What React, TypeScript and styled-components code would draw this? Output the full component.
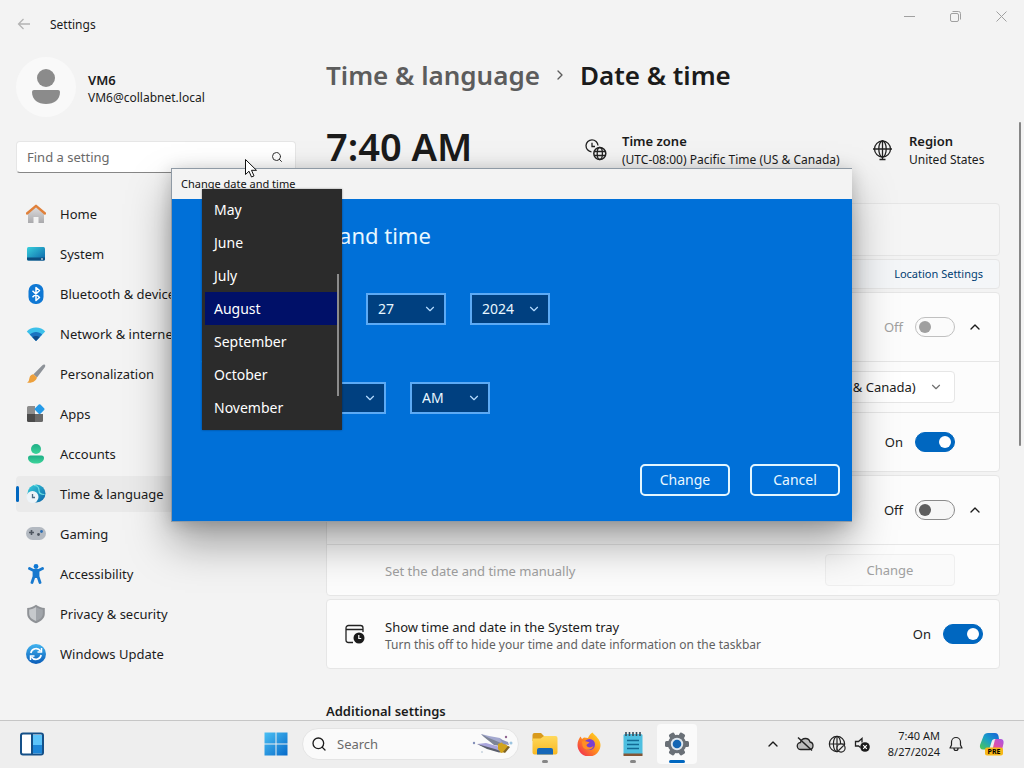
import { FC, ReactNode } from 'react';
import styled, { createGlobalStyle } from 'styled-components';
import { ChevronDown, ChevronRight, ChevronUp, Search } from 'lucide-react';

const colors = {
    window: '#f3f3f3',
    card: '#fcfcfc',
    line: '#e6e6e6',
    text: '#1b1b1b',
    muted: '#616161',
    disabled: '#a0a0a0',
    accent: '#0067c0',
    dialog: '#0070d8',
    dialogField: '#004080',
    dialogFieldBorder: '#5caaf5',
    menu: '#2b2b2b',
    menuActive: '#001068',
};

const GlobalStyle = createGlobalStyle`
    * {
        box-sizing: border-box;
    }
    body {
        margin: 0;
        font-family: "Noto Sans", "Open Sans", sans-serif;
        font-size: 13px;
        line-height: 20px;
        color: ${colors.text};
        background: ${colors.window};
    }
    button, input, select {
        font: inherit;
        color: inherit;
    }
    h1, h2, p, ul {
        margin: 0;
        padding: 0;
    }
`;

const Desktop = styled.div`
    position: relative;
    display: flex;
    flex-direction: column;
    height: 100vh;
    overflow: hidden;
`;

const SettingsWindow = styled.div`
    flex: 1;
    min-height: 0;
    display: flex;
    flex-direction: column;
    overflow: hidden;
`;

/* ---------- title bar ---------- */

const TitleBar = styled.header`
    flex: none;
    display: flex;
    align-items: center;
    height: 48px;
    padding-left: 16px;
    font-size: 12px;
`;

const TitleText = styled.span`
    padding-top: 2px;
`;

const BackButton = styled.button`
    display: flex;
    padding: 0;
    margin-right: 18px;
    border: 0;
    background: none;
    color: #b4b4b4;
`;

const WindowControls = styled.div`
    display: flex;
    margin-left: auto;
    align-self: flex-start;
`;

const WindowButton = styled.button`
    display: flex;
    align-items: center;
    justify-content: center;
    width: 46px;
    height: 32px;
    padding: 0;
    border: 0;
    background: none;
    color: #a0a0a0;
`;

const WindowBody = styled.div`
    flex: 1;
    min-height: 0;
    display: flex;
    align-items: flex-start;
`;

/* ---------- sidebar ---------- */

const Sidebar = styled.aside`
    flex: none;
    width: 326px;
    padding: 9px 18px 0 16px;
`;

const Profile = styled.div`
    display: flex;
    align-items: center;
    gap: 12px;
    margin-bottom: 24px;
`;

const Avatar = styled.div`
    display: flex;
    align-items: center;
    justify-content: center;
    width: 60px;
    height: 60px;
    border-radius: 50%;
    background: #f9f9f9;
`;

const ProfileText = styled.div`
    padding-top: 3px;
`;

const ProfileName = styled.p`
    font-weight: 600;
    line-height: 18px;
`;

const ProfileMail = styled.p`
    font-size: 12px;
    line-height: 18px;
`;

const SearchField = styled.label`
    display: flex;
    align-items: center;
    height: 32px;
    margin-right: 12px;
    padding: 0 12px 0 10px;
    border: 1px solid ${colors.line};
    border-bottom-color: #868686;
    border-radius: 4px;
    background: #ffffff;
    color: #333333;
`;

const SearchInput = styled.input`
    flex: 1;
    min-width: 0;
    padding: 0;
    border: 0;
    outline: 0;
    background: none;
    &::placeholder {
        color: #6a6a6a;
        opacity: 1;
    }
`;

const Nav = styled.nav`
    display: flex;
    flex-direction: column;
    gap: 4px;
    margin-top: 23px;
`;

const NavLink = styled.a<{ $active?: boolean }>`
    display: flex;
    align-items: center;
    gap: 14px;
    height: 36px;
    border-radius: 4px;
    color: ${colors.text};
    text-decoration: none;
    white-space: nowrap;
    background: ${({ $active }) => ($active ? '#eaeaea' : 'none')};
    &::before {
        content: '';
        width: 3px;
        height: 16px;
        margin-right: -7px;
        border-radius: 2px;
        background: ${({ $active }) => ($active ? colors.accent : 'none')};
    }
    svg {
        flex: none;
    }
`;

/* ---------- main column ---------- */

const Main = styled.main`
    flex: 1;
    min-width: 0;
    padding-top: 7px;
`;

const Breadcrumb = styled.div`
    display: flex;
    align-items: center;
    height: 40px;
    font-size: 26px;
    font-weight: 600;
    line-height: 40px;
`;

const CrumbLink = styled.a`
    color: #5c5c5c;
    text-decoration: none;
`;

const CrumbTitle = styled.h1`
    font: inherit;
`;

const CrumbArrow = styled(ChevronRight)`
    margin: 0 12px;
    color: #5c5c5c;
`;

const Summary = styled.div`
    display: grid;
    grid-template-columns: 1fr 287px 128px;
    align-items: center;
    height: 56px;
    margin: 23px 0 29px;
`;

const Clock = styled.p`
    font-size: 38px;
    font-weight: 600;
    line-height: 56px;
`;

const SummaryItem = styled.div`
    display: flex;
    align-items: center;
    gap: 15px;
    padding-top: 8px;
    white-space: nowrap;
`;

const SummaryLabel = styled.p`
    font-weight: 600;
    line-height: 20px;
`;

const SummaryValue = styled.p`
    font-size: 12px;
    line-height: 18px;
`;

const Card = styled.section<{ $tone?: string }>`
    margin-bottom: 3px;
    border: 1px solid ${colors.line};
    border-radius: 4px;
    background: ${({ $tone }) => $tone || colors.card};
`;

const Row = styled.div<{ $height: number; $inset?: boolean }>`
    display: flex;
    align-items: center;
    justify-content: flex-end;
    gap: 12px;
    height: ${({ $height }) => $height}px;
    padding: 0 ${({ $inset }) => ($inset ? 44 : 16)}px 0 18px;
    & + & {
        border-top: 1px solid ${colors.line};
    }
`;

const RowText = styled.div<{ $disabled?: boolean; $indent?: boolean }>`
    flex: 1;
    padding: 2px 0 0 ${({ $indent }) => ($indent ? 40 : 8)}px;
    color: ${({ $disabled }) => ($disabled ? colors.disabled : colors.text)};
`;

const RowHint = styled.p`
    font-size: 12px;
    line-height: 16px;
    color: ${colors.muted};
`;

const LocationLink = styled.a`
    font-size: 11px;
    color: #003e73;
    text-decoration: none;
`;

const SwitchLabel = styled.label<{ $disabled?: boolean }>`
    display: flex;
    align-items: center;
    gap: 12px;
    color: ${({ $disabled }) => ($disabled ? colors.disabled : colors.text)};
`;

const Switch = styled.input`
    appearance: none;
    display: flex;
    align-items: center;
    width: 40px;
    height: 20px;
    margin: 0;
    padding: 0 3px;
    border: 1px solid #8a8a8a;
    border-radius: 10px;
    background: #f6f6f6;
    &::before {
        content: '';
        width: 12px;
        height: 12px;
        border-radius: 50%;
        background: #5d5d5d;
    }
    &:disabled {
        border-color: #c0c0c0;
        background: #fbfbfb;
    }
    &:disabled::before {
        background: #a0a0a0;
    }
    &:checked {
        justify-content: flex-end;
        border-color: ${colors.accent};
        background: ${colors.accent};
    }
    &:checked::before {
        background: #ffffff;
    }
`;

const ExpandButton = styled.button`
    display: flex;
    padding: 0;
    border: 0;
    background: none;
`;

const DisabledButton = styled.button`
    width: 130px;
    height: 32px;
    border: 1px solid #efefef;
    border-radius: 4px;
    background: #fafafa;
    color: ${colors.disabled};
`;

const SelectBox = styled.div<{ $width: number; $dark?: boolean }>`
    position: relative;
    width: ${({ $width }) => $width}px;
    select {
        appearance: none;
        width: 100%;
        height: 32px;
        padding: 0 24px 0 ${({ $dark }) => ($dark ? 10 : 12)}px;
        border: ${({ $dark }) => ($dark ? `2px solid ${colors.dialogFieldBorder}` : `1px solid ${colors.line}`)};
        border-radius: ${({ $dark }) => ($dark ? 0 : 4)}px;
        background: ${({ $dark }) => ($dark ? colors.dialogField : '#ffffff')};
    }
    svg {
        position: absolute;
        top: 9px;
        right: ${({ $dark }) => ($dark ? 9 : 12)}px;
        pointer-events: none;
        color: ${({ $dark }) => ($dark ? '#b5dcff' : '#707070')};
    }
`;

const SectionTitle = styled.h2`
    padding-top: 28px;
    font-size: 13px;
    font-weight: 600;
    line-height: 22px;
`;

const ScrollThumb = styled.div`
    flex: none;
    width: 2px;
    height: 324px;
    margin: 74px 3px 0 19px;
    border-radius: 1px;
    background: #868686;
`;

/* ---------- dialog ---------- */

const Dialog = styled.section`
    position: absolute;
    top: 168px;
    left: 50%;
    width: 681px;
    margin-left: -341px;
    border: 1px solid #8f9aa5;
    border-width: 1px 0 1px 1px;
    background: ${colors.dialog};
    color: #e8f7ff;
    box-shadow: 0 22px 40px rgba(0, 0, 0, 0.34), 0 2px 16px rgba(0, 0, 0, 0.18);
`;

const DialogBar = styled.header`
    height: 30px;
    padding-left: 9px;
    font-size: 11px;
    line-height: 30px;
    color: #111111;
    background: #f3f3f3;
`;

const DialogBody = styled.div`
    padding: 20px 12px 25px 30px;
    font-size: 14px;
`;

const DialogTitle = styled.h2`
    font-size: 22px;
    font-weight: 400;
    line-height: 32px;
`;

const FieldSet = styled.fieldset`
    min-width: 0;
    margin: 0;
    padding: 16px 0 0;
    border: 0;
    legend {
        float: left;
        width: 100%;
        padding: 0;
        margin-bottom: 6px;
        line-height: 20px;
    }
    & + & {
        padding-top: 31px;
    }
`;

const FieldRow = styled.div`
    clear: both;
    display: flex;
    gap: 24px;
`;

const DialogActions = styled.div`
    display: flex;
    justify-content: flex-end;
    gap: 20px;
    padding-top: 50px;
`;

const DialogButton = styled.button`
    width: 90px;
    height: 32px;
    padding: 0;
    border: 2px solid #e2f6ff;
    border-radius: 5px;
    background: ${colors.dialog};
`;

const MonthMenu = styled.ul`
    position: absolute;
    top: 20px;
    left: 30px;
    width: 140px;
    padding: 4px 5px 6px 3px;
    list-style: none;
    background: ${colors.menu};
    color: #ffffff;
    font-size: 14px;
    line-height: 33px;
    box-shadow: 0 0 2px rgba(0, 0, 0, 0.4);
    &::after {
        content: '';
        position: absolute;
        top: 85px;
        right: 3px;
        width: 2px;
        height: 122px;
        background: #8c8c8c;
    }
`;

const MonthOption = styled.li<{ $active: boolean }>`
    padding-left: 9px;
    background: ${({ $active }) => ($active ? colors.menuActive : 'none')};
`;

const Pointer = styled.svg`
    position: absolute;
    top: 158px;
    left: 244px;
`;

/* ---------- taskbar ---------- */

const Taskbar = styled.footer`
    flex: none;
    display: flex;
    align-items: center;
    height: 48px;
    padding-right: 13px;
    background: #eeeeee;
    box-shadow: inset 0 1px 0 #c6c6c6;
`;

const TaskbarStart = styled.div`
    flex: 0 1 256px;
    padding-left: 12px;
`;

const TaskbarApps = styled.div`
    display: flex;
    align-items: center;
    gap: 4px;
`;

const TaskButton = styled.button<{ $state?: 'open' | 'active' }>`
    position: relative;
    display: flex;
    align-items: center;
    justify-content: center;
    width: 40px;
    height: 40px;
    padding: 0;
    border: 0;
    border-radius: 4px;
    background: ${({ $state }) => ($state === 'active' ? '#fafafa' : 'none')};
    &::after {
        content: '';
        display: ${({ $state }) => ($state ? 'block' : 'none')};
        position: absolute;
        bottom: 1px;
        width: ${({ $state }) => ($state === 'active' ? 16 : 6)}px;
        height: 3px;
        border-radius: 2px;
        background: ${({ $state }) => ($state === 'active' ? colors.accent : '#868686')};
    }
`;

const TaskSearch = styled.label`
    display: flex;
    align-items: center;
    gap: 10px;
    width: 217px;
    height: 32px;
    margin: 0 2px;
    padding: 0 4px 0 8px;
    border: 1px solid #e4e4e4;
    border-radius: 16px;
    background: #fafafa;
`;

const Tray = styled.div`
    display: flex;
    align-items: center;
    margin-left: auto;
`;

const TrayButton = styled.button<{ $width: number }>`
    display: flex;
    align-items: center;
    justify-content: center;
    width: ${({ $width }) => $width}px;
    height: 40px;
    padding: 0;
    border: 0;
    background: none;
`;

const TrayClock = styled.div`
    width: 69px;
    text-align: right;
    font-size: 11px;
    line-height: 16px;
`;

/* ---------- drawings ---------- */

const IconDefs: FC = () => (
    <svg width="0" height="0" style={{ position: 'absolute' }} aria-hidden="true">
        <defs>
            <linearGradient id="teal" x1="0" y1="0" x2="1" y2="1">
                <stop offset="0" stopColor="#38d0dc" />
                <stop offset="1" stopColor="#0b62a8" />
            </linearGradient>
            <linearGradient id="sky" x1="0" y1="0" x2="0" y2="1">
                <stop offset="0" stopColor="#41b4f0" />
                <stop offset="1" stopColor="#0a5cb8" />
            </linearGradient>
            <linearGradient id="wall" x1="0" y1="0" x2="0" y2="1">
                <stop offset="0" stopColor="#e0dedf" />
                <stop offset="1" stopColor="#a9a9ac" />
            </linearGradient>
            <linearGradient id="green" x1="0" y1="0" x2="0" y2="1">
                <stop offset="0" stopColor="#1fae86" />
                <stop offset="1" stopColor="#3cd49a" />
            </linearGradient>
            <linearGradient id="start" x1="0" y1="0" x2="24" y2="24" gradientUnits="userSpaceOnUse">
                <stop offset="0" stopColor="#4cc2f5" />
                <stop offset="1" stopColor="#0568c8" />
            </linearGradient>
            <linearGradient id="folder" x1="0" y1="0" x2="0" y2="1">
                <stop offset="0" stopColor="#ffd95c" />
                <stop offset="1" stopColor="#f7b823" />
            </linearGradient>
            <linearGradient id="fox" x1="1" y1="0" x2="0" y2="1">
                <stop offset="0" stopColor="#ffe226" />
                <stop offset="0.5" stopColor="#ff8a1e" />
                <stop offset="1" stopColor="#ee1c5c" />
            </linearGradient>
            <linearGradient id="pilotA" x1="0" y1="1" x2="1" y2="0">
                <stop offset="0" stopColor="#53c94a" />
                <stop offset="0.5" stopColor="#19a0c8" />
                <stop offset="1" stopColor="#1760d8" />
            </linearGradient>
            <linearGradient id="pilotB" x1="0" y1="1" x2="1" y2="0">
                <stop offset="0" stopColor="#f57a4c" />
                <stop offset="0.5" stopColor="#e04fa8" />
                <stop offset="1" stopColor="#a558e8" />
            </linearGradient>
        </defs>
    </svg>
);

const HomeIcon = () => (
    <svg width="20" height="20" viewBox="0 0 20 20">
        <path d="M2 9 10 2.500 18 9v10h-5.500v-6h-5v6H2z" fill="url(#wall)" />
        <path d="M1 9.500 10 1.800l9 7.700" fill="none" stroke="#e0803a" strokeWidth="2.400" strokeLinecap="round" strokeLinejoin="round" />
    </svg>
);

const SystemIcon = () => (
    <svg width="20" height="20" viewBox="0 0 20 20">
        <rect x="1" y="3" width="18" height="13.500" rx="1.500" fill="url(#teal)" />
        <path d="M1 13.500h18V15a1.500 1.500 0 0 1-1.500 1.500h-15A1.500 1.500 0 0 1 1 15z" fill="#0d4f80" />
        <path d="M15 15h2" stroke="#ffffff" />
    </svg>
);

const BluetoothIcon = () => (
    <svg width="20" height="20" viewBox="0 0 20 20">
        <rect x="2.500" y="0" width="15" height="20" rx="7" fill="#0f78d4" />
        <path d="m6.500 6.800 7 6.700-3.500 3V3.500l3.500 3-7 6.700" fill="none" stroke="#ffffff" strokeWidth="1.500" strokeLinejoin="round" />
    </svg>
);

const NetworkIcon = () => (
    <svg width="20" height="20" viewBox="0 0 20 20">
        <path d="M10 17 .8 7.500C3 4.800 6.300 3.500 10 3.500s7 1.300 9.200 4z" fill="#3cc0ea" />
        <path d="M10 17 3.800 10.500C5.500 9 7.600 8 10 8s4.500 1 6.200 2.500z" fill="#1a72c0" />
        <path d="m10 17-3.600-3.800C7.400 12.400 8.600 12 10 12s2.600.4 3.600 1.200z" fill="#104a8a" />
    </svg>
);

const BrushIcon = () => (
    <svg width="20" height="20" viewBox="0 0 20 20">
        <path d="M18.800.8c.8.700.5 1.700-.2 2.700l-7.600 10-3.500-3.300 8.700-8.700c.9-.9 1.900-1.300 2.600-.7z" fill="#8d9298" />
        <path d="M7.500 10.200 11 13.500c-1.200 3.800-5 6-10 5 2-1 2-2.500 2.500-4.800.5-2.200 2.200-3.500 4-3.500z" fill="#eda03c" />
    </svg>
);

const AppsIcon = () => (
    <svg width="20" height="20" viewBox="0 0 20 20">
        <path d="M1 3.500A1.500 1.500 0 0 1 2.500 2H9v8H1z" fill="#8c8c8c" />
        <path d="M1 10h8v8H2.500A1.500 1.500 0 0 1 1 16.500z" fill="#4b4b4b" />
        <path d="M9 10h8v6.500a1.500 1.500 0 0 1-1.500 1.500H9z" fill="#696969" />
        <rect x="9.800" y="1.300" width="7.600" height="7.600" rx="1.200" transform="rotate(45 13.600 5.100)" fill="#249ae8" />
    </svg>
);

const AccountsIcon = () => (
    <svg width="20" height="20" viewBox="0 0 20 20">
        <circle cx="10" cy="5" r="5" fill="url(#green)" />
        <path d="M4.500 11.500h11A2.500 2.500 0 0 1 18 14c0 3.500-3.500 5.500-8 5.500S2 17.500 2 14a2.500 2.500 0 0 1 2.500-2.500z" fill="url(#green)" />
    </svg>
);

const TimeIcon = () => (
    <svg width="20" height="20" viewBox="0 0 20 20">
        <circle cx="10.500" cy="9.500" r="9" fill="url(#teal)" />
        <path d="M8 1.500c4 0 5 2.500 5 5s2 4 5.500 4" fill="none" stroke="#6fe0e2" strokeWidth="1.200" />
        <circle cx="6.500" cy="13" r="6" fill="#eef4f8" />
        <path d="M6.500 10v3.500H9" fill="none" stroke="#4b6a84" strokeWidth="1.300" />
    </svg>
);

const GamingIcon = () => (
    <svg width="20" height="20" viewBox="0 0 20 20">
        <rect x="0" y="3" width="20" height="13" rx="6.500" fill="#b3b9c1" />
        <path d="M3 8.500h5M5.500 6v5" stroke="#4e5660" strokeWidth="1.600" />
        <circle cx="15.500" cy="7.500" r="1.400" fill="#2f6eb0" />
        <circle cx="12.500" cy="10.500" r="1.400" fill="#4e5660" />
    </svg>
);

const AccessibilityIcon = () => (
    <svg width="20" height="20" viewBox="0 0 20 20">
        <circle cx="10" cy="2.500" r="2.400" fill="#0f78d4" />
        <path d="m3.500 4.500 4 2h5l4-2M10 6.500v6M8 7v5.500L6 18.500M12 7v5.500l2 6" fill="none" stroke="#1779cf" strokeWidth="2.800" strokeLinecap="round" strokeLinejoin="round" />
    </svg>
);

const PrivacyIcon = () => (
    <svg width="20" height="20" viewBox="0 0 20 20">
        <path d="M10 .8c2.500 2 5.500 3 8.800 3.200v5.500c0 4.500-3.300 7.700-8.800 9.700-5.500-2-8.800-5.200-8.800-9.700V4C4.500 3.800 7.500 2.800 10 .8z" fill="#8f9296" />
        <path d="M10 3c2 1.400 4.300 2.300 6.800 2.600v4c0 3.400-2.400 5.800-6.800 7.500z" fill="#a1a5aa" />
        <path d="M10 3C8 4.400 5.700 5.300 3.200 5.600v4c0 3.400 2.400 5.800 6.800 7.500z" fill="#c6c9cc" />
    </svg>
);

const UpdateIcon = () => (
    <svg width="20" height="20" viewBox="0 0 20 20">
        <circle cx="10" cy="10" r="10" fill="url(#sky)" />
        <path d="M4.800 9A5.400 5.400 0 0 1 14.500 7M15.200 11A5.400 5.400 0 0 1 5.500 13" fill="none" stroke="#ffffff" strokeWidth="1.600" />
        <path d="M15.500 4v4h-4M4.500 16v-4h4" fill="none" stroke="#ffffff" strokeWidth="1.500" />
    </svg>
);

const GlobePaths = () => (
    <>
        <circle cx="10" cy="10" r="8.500" />
        <ellipse cx="10" cy="10" rx="4" ry="8.500" />
        <path d="M1.500 10h17M10 1.500v17" />
    </>
);

const RegionIcon = () => (
    <svg width="22" height="22" viewBox="0 0 22 22" fill="none" stroke="#222222" strokeWidth="1.300">
        <circle cx="10.500" cy="10" r="8" />
        <ellipse cx="10.500" cy="10" rx="3.700" ry="8" />
        <path d="M1 10h19M10.500 1v20M7.500 20.500h6" />
    </svg>
);

const TimeZoneIcon = () => (
    <svg width="22" height="22" viewBox="0 0 22 22" fill="none" stroke="#222222" strokeWidth="1.300">
        <path d="M6.500 12.800A6 6 0 1 1 13 6.500M7 3.800V7.500h3" />
        <circle cx="14.800" cy="14.500" r="6" strokeWidth="1.500" />
        <ellipse cx="14.800" cy="14.500" rx="2.600" ry="6" />
        <path d="M9.300 12.500h11M9.300 16.500h11" />
    </svg>
);

const CalendarClockIcon = () => (
    <svg width="20" height="20" viewBox="0 0 20 20">
        <path d="M8 18.500H3.500a2.500 2.500 0 0 1-2.500-2.500V4a2.500 2.500 0 0 1 2.500-2.500h12A2.500 2.500 0 0 1 18 4v4M1 5.500h17" fill="none" stroke="#222222" strokeWidth="1.300" />
        <circle cx="14" cy="14" r="5.500" fill="#1b1b1b" />
        <path d="M13.800 11v3.500h2.400" fill="none" stroke="#ffffff" strokeWidth="1.200" />
    </svg>
);

const BloomIcon = () => (
    <svg width="42" height="26" viewBox="0 0 42 26">
        <path d="m9 3 8 2 11 2 5 4-7 3-11-6z" fill="#a3a8cf" />
        <path d="m9 3 3 3 10 8 6 1 1-3-12-5z" fill="#7d8496" />
        <path d="m5 13 9-1 14 4 3 5-8-1z" fill="#a9a5dc" />
        <path d="m5 13 10 5 12 3.500 4-.5-8-3z" fill="#5b5f6c" />
        <path d="m26 13 5-2 6 5-4 5-4 1-3-4z" fill="#d2a31c" />
        <path d="m28 8 8 3 1 3-6-1z" fill="#8d95bd" />
        <path d="m31 21 5-6 2 1-5 6z" fill="#7e6324" />
        <circle cx="2" cy="12" r="1.200" fill="#8590b8" />
        <circle cx="34" cy="6" r="1.200" fill="#8f6490" />
        <circle cx="39" cy="12" r="1.500" fill="#9cc4e0" />
        <circle cx="10" cy="21" r="0.800" fill="#a5b8ca" />
    </svg>
);

const WidgetsIcon = () => (
    <svg width="24" height="24" viewBox="0 0 24 24">
        <rect x="1" y="1.500" width="22" height="21" rx="2" fill="#ffffff" stroke="#155088" strokeWidth="2" />
        <path d="M13 3h9v10h-9z" fill="#5cc4fa" />
        <path d="M13 13h9v8.500h-9z" fill="#1c86d8" />
        <path d="M12 2v20" stroke="#155088" strokeWidth="2" />
    </svg>
);

const StartIcon = () => (
    <svg width="24" height="24" viewBox="0 0 24 24" fill="url(#start)">
        <path d="M.5.5h11v11H.5zM12.500.5h11v11h-11zM.5 12.500h11v11H.5zM12.500 12.500h11v11h-11z" />
    </svg>
);

const ExplorerIcon = () => (
    <svg width="26" height="24" viewBox="0 0 26 24">
        <path d="M.5 3A2 2 0 0 1 2.500 1H9l3 3v5H.5z" fill="#d99a1c" />
        <path d="M.5 6.500h8L12 4h11.500a2 2 0 0 1 2 2v14.500a2 2 0 0 1-2 2h-21a2 2 0 0 1-2-2z" fill="url(#folder)" />
        <path d="M5 22.500V18a2 2 0 0 1 2-2h12a2 2 0 0 1 2 2v4.500z" fill="#1567b8" />
    </svg>
);

const FirefoxIcon = () => (
    <svg width="24" height="24" viewBox="0 0 24 24">
        <path d="M15.500.5c1 2 3.500 3 5 5.500 1.800 2 3 4.500 3 7A11.500 11.500 0 1 1 .5 13C.5 9.500 2 6.500 3.500 4.500L5 7l2-1.500L11 6c1-2.500 2.500-4.500 4.500-5.500z" fill="url(#fox)" />
        <circle cx="12.500" cy="12.500" r="5.500" fill="#7a3fd0" />
        <path d="M5 9.500c3-1.500 5 .5 7.500.5-1 2-3 2-3 3.500 1 2.500 5 2.500 7 .5-1 4.500-9 5.500-11 0z" fill="#ff8f24" />
    </svg>
);

const NotepadIcon = () => (
    <svg width="22" height="26" viewBox="0 0 22 26">
        <rect x="1.500" y="3" width="19" height="21" rx="1.500" fill="#4ebfe0" />
        <path d="M4 1v4M7.500 1v4M11 1v4M14.500 1v4M18 1v4" stroke="#3a4a58" strokeWidth="1.600" />
        <path d="M5 9.500h12M5 13.500h12M5 17.500h12" stroke="#126a94" strokeWidth="1.500" />
        <path d="M1.500 22.500h19V25h-19z" fill="#855636" />
    </svg>
);

const GearIcon = () => (
    <svg width="26" height="26" viewBox="0 0 26 26">
        <g fill="#6a7077">
            <rect x="10" y="1" width="6" height="24" rx="1.500" transform="rotate(30 13 13)" />
            <rect x="10" y="1" width="6" height="24" rx="1.500" transform="rotate(90 13 13)" />
            <rect x="10" y="1" width="6" height="24" rx="1.500" transform="rotate(150 13 13)" />
            <circle cx="13" cy="13" r="9.200" />
        </g>
        <circle cx="13" cy="13" r="6.200" fill="#dfe7ee" />
        <circle cx="13" cy="13" r="4.300" fill="#1466b4" />
    </svg>
);

const CloudOffIcon = () => (
    <svg width="18" height="16" viewBox="0 0 18 16">
        <path d="M5 13.500a3.500 3.500 0 0 1-.5-7C5 4 7 2.500 9.500 2.500s4 1.500 4.500 3.500a3.800 3.800 0 0 1-.5 7.500z" fill="#bdbdbd" stroke="#222222" strokeWidth="1.300" />
        <path d="m2 1.500 14 13" stroke="#222222" strokeWidth="1.500" />
    </svg>
);

const GlobeOffIcon = () => (
    <svg width="18" height="18" viewBox="0 0 20 20" fill="none" stroke="#222222" strokeWidth="1.300">
        <GlobePaths />
        <circle cx="14.500" cy="14.500" r="4.500" fill="#eeeeee" />
        <path d="m11.500 17.500 6-6" />
    </svg>
);

const VolumeOffIcon = () => (
    <svg width="16" height="16" viewBox="0 0 16 16">
        <path d="M6.500 11.500 4.500 10H1.500V5.500h3L8 2.500v4" fill="none" stroke="#222222" strokeWidth="1.300" />
        <circle cx="11" cy="11" r="4.800" fill="#1b1b1b" />
        <path d="m9.200 9.200 3.600 3.600M12.800 9.200l-3.600 3.600" stroke="#ffffff" strokeWidth="1.200" />
    </svg>
);

const BellIcon = () => (
    <svg width="14" height="16" viewBox="0 0 14 16" fill="none" stroke="#222222" strokeWidth="1.200">
        <path d="M1 12h12l-1.500-3V6a4.500 4.500 0 0 0-9 0v3zM5 12.500a2 2 0 0 0 4 0" strokeLinejoin="round" />
    </svg>
);

const PreBadge = styled.text`
    font-size: 7px;
    font-weight: 700;
`;

const CopilotIcon = () => (
    <svg width="26" height="26" viewBox="0 0 26 26">
        <path d="M9 2h7c2 0 3 1 3.500 3L20 8h-4c-2 0-3 1-3.500 3l-1.500 5c-.5 2-1.500 2.500-3 2.500H4c-2.500 0-3.500-2-3-4.500L4.500 5C5 3 7 2 9 2z" fill="url(#pilotA)" />
        <path d="M17 8h4.500c2.500 0 3.500 2 3 4.500L23 19c-.5 2-2 3-4 3h-7c-2 0-3-1-2.500-3h2c1.500 0 2-1 2.500-2.500l1.500-6C15.800 9 16 8 17 8z" fill="url(#pilotB)" />
        <rect x="6" y="16.500" width="18" height="8" rx="2" fill="#f8b818" />
        <PreBadge x="15" y="23" textAnchor="middle">PRE</PreBadge>
    </svg>
);

/* ---------- data ---------- */

type INavItem = {
    label: string;
    icon: ReactNode;
    active?: boolean;
}

const navItems: INavItem[] = [
    { label: 'Home', icon: <HomeIcon /> },
    { label: 'System', icon: <SystemIcon /> },
    { label: 'Bluetooth & devices', icon: <BluetoothIcon /> },
    { label: 'Network & internet', icon: <NetworkIcon /> },
    { label: 'Personalization', icon: <BrushIcon /> },
    { label: 'Apps', icon: <AppsIcon /> },
    { label: 'Accounts', icon: <AccountsIcon /> },
    { label: 'Time & language', icon: <TimeIcon />, active: true },
    { label: 'Gaming', icon: <GamingIcon /> },
    { label: 'Accessibility', icon: <AccessibilityIcon /> },
    { label: 'Privacy & security', icon: <PrivacyIcon /> },
    { label: 'Windows Update', icon: <UpdateIcon /> },
];

const months = ['May', 'June', 'July', 'August', 'September', 'October', 'November'];

/* ---------- components ---------- */

type ISelectProps = {
    label: string;
    value: string;
    width: number;
    dark?: boolean;
}

const SelectField: FC<ISelectProps> = ({ label, value, width, dark }) => (
    <SelectBox $width={width} $dark={dark}>
        <select aria-label={label} defaultValue={value}>
            <option>{value}</option>
        </select>
        <ChevronDown size={14} strokeWidth={2} />
    </SelectBox>
);

type IToggleProps = {
    label: string;
    on?: boolean;
    disabled?: boolean;
}

const Toggle: FC<IToggleProps> = ({ label, on, disabled }) => (
    <SwitchLabel $disabled={disabled}>
        {on ? 'On' : 'Off'}
        <Switch type="checkbox" role="switch" aria-label={label} defaultChecked={on} disabled={disabled} />
    </SwitchLabel>
);

const Expander: FC = () => (
    <ExpandButton aria-label="Collapse">
        <ChevronUp size={16} strokeWidth={2} />
    </ExpandButton>
);

const SettingsSidebar: FC = () => (
    <Sidebar>
        <Profile>
            <Avatar>
                <svg width="30" height="36" viewBox="0 0 30 36" fill="#8b8b8b">
                    <circle cx="15" cy="9" r="9" />
                    <path d="M3 21h24a2 2 0 0 1 2 2c0 8-6 12-14 12S1 31 1 23a2 2 0 0 1 2-2z" />
                </svg>
            </Avatar>
            <ProfileText>
                <ProfileName>VM6</ProfileName>
                <ProfileMail>VM6@collabnet.local</ProfileMail>
            </ProfileText>
        </Profile>
        <SearchField>
            <SearchInput type="text" placeholder="Find a setting" aria-label="Find a setting" />
            <Search size={12} strokeWidth={2} />
        </SearchField>
        <Nav>
            {navItems.map((item) => (
                <NavLink key={item.label} href="#" $active={item.active}>
                    {item.icon}
                    {item.label}
                </NavLink>
            ))}
        </Nav>
    </Sidebar>
);

const DateTimePage: FC = () => (
    <Main>
        <Breadcrumb>
            <CrumbLink href="#">Time &amp; language</CrumbLink>
            <CrumbArrow size={16} strokeWidth={2} />
            <CrumbTitle>Date &amp; time</CrumbTitle>
        </Breadcrumb>
        <Summary>
            <Clock>7:40 AM</Clock>
            <SummaryItem>
                <TimeZoneIcon />
                <div>
                    <SummaryLabel>Time zone</SummaryLabel>
                    <SummaryValue>(UTC-08:00) Pacific Time (US &amp; Canada)</SummaryValue>
                </div>
            </SummaryItem>
            <SummaryItem>
                <RegionIcon />
                <div>
                    <SummaryLabel>Region</SummaryLabel>
                    <SummaryValue>United States</SummaryValue>
                </div>
            </SummaryItem>
        </Summary>

        <Card $tone="#f5f5f5">
            <Row $height={51} />
        </Card>
        <Card $tone="#f4f6f8">
            <Row $height={28}>
                <LocationLink href="#">Location Settings</LocationLink>
            </Row>
        </Card>
        <Card>
            <Row $height={68}>
                <Toggle label="Set time zone automatically" disabled />
                <Expander />
            </Row>
            <Row $height={51} $inset>
                <SelectField label="Time zone" value="(UTC-08:00) Pacific Time (US & Canada)" width={288} />
            </Row>
            <Row $height={59} $inset>
                <Toggle label="Adjust for daylight saving time" on />
            </Row>
        </Card>
        <Card>
            <Row $height={68}>
                <Toggle label="Set time automatically" />
                <Expander />
            </Row>
            <Row $height={51} $inset>
                <RowText $disabled $indent>Set the date and time manually</RowText>
                <DisabledButton disabled>Change</DisabledButton>
            </Row>
        </Card>
        <Card>
            <Row $height={68}>
                <CalendarClockIcon />
                <RowText>
                    Show time and date in the System tray
                    <RowHint>Turn this off to hide your time and date information on the taskbar</RowHint>
                </RowText>
                <Toggle label="Show time and date in the System tray" on />
            </Row>
        </Card>
        <SectionTitle>Additional settings</SectionTitle>
    </Main>
);

const ChangeDialog: FC = () => (
    <Dialog role="dialog" aria-label="Change date and time">
        <DialogBar>Change date and time</DialogBar>
        <DialogBody>
            <DialogTitle>Change date and time</DialogTitle>
            <FieldSet>
                <legend>Date</legend>
                <FieldRow>
                    <SelectField label="Month" value="August" width={140} dark />
                    <SelectField label="Day" value="27" width={80} dark />
                    <SelectField label="Year" value="2024" width={80} dark />
                </FieldRow>
            </FieldSet>
            <FieldSet>
                <legend>Time</legend>
                <FieldRow>
                    <SelectField label="Hour" value="7" width={80} dark />
                    <SelectField label="Minute" value="" width={80} dark />
                    <SelectField label="AM or PM" value="AM" width={80} dark />
                </FieldRow>
            </FieldSet>
            <DialogActions>
                <DialogButton>Change</DialogButton>
                <DialogButton>Cancel</DialogButton>
            </DialogActions>
        </DialogBody>
        <MonthMenu role="listbox" aria-label="Month">
            {months.map((month) => (
                <MonthOption key={month} role="option" aria-selected={month === 'August'} $active={month === 'August'}>
                    {month}
                </MonthOption>
            ))}
        </MonthMenu>
    </Dialog>
);

const DesktopTaskbar: FC = () => (
    <Taskbar>
        <TaskbarStart>
            <TaskButton aria-label="Widgets"><WidgetsIcon /></TaskButton>
        </TaskbarStart>
        <TaskbarApps>
            <TaskButton aria-label="Start"><StartIcon /></TaskButton>
            <TaskSearch>
                <Search size={16} strokeWidth={2} />
                <SearchInput type="text" placeholder="Search" aria-label="Search" />
                <BloomIcon />
            </TaskSearch>
            <TaskButton aria-label="File Explorer" $state="open"><ExplorerIcon /></TaskButton>
            <TaskButton aria-label="Firefox"><FirefoxIcon /></TaskButton>
            <TaskButton aria-label="Notepad" $state="open"><NotepadIcon /></TaskButton>
            <TaskButton aria-label="Settings" $state="active"><GearIcon /></TaskButton>
        </TaskbarApps>
        <Tray>
            <TrayButton $width={32} aria-label="Show hidden icons"><ChevronUp size={16} strokeWidth={2} /></TrayButton>
            <TrayButton $width={32} aria-label="OneDrive"><CloudOffIcon /></TrayButton>
            <TrayButton $width={32} aria-label="Network"><GlobeOffIcon /></TrayButton>
            <TrayButton $width={18} aria-label="Volume"><VolumeOffIcon /></TrayButton>
            <TrayClock>
                <p>7:40 AM</p>
                <p>8/27/2024</p>
            </TrayClock>
            <TrayButton $width={32} aria-label="Notifications"><BellIcon /></TrayButton>
            <TrayButton $width={39} aria-label="Copilot"><CopilotIcon /></TrayButton>
        </Tray>
    </Taskbar>
);

const App: FC = () => {

    return <>
        <GlobalStyle />
        <IconDefs />
        <Desktop>
            <SettingsWindow>
                <TitleBar>
                    <BackButton aria-label="Back">
                        <svg width="16" height="16" viewBox="0 0 16 16" fill="none" stroke="currentColor" strokeWidth="1.300">
                            <path d="M14 8H2.500M7.500 3l-5 5 5 5" />
                        </svg>
                    </BackButton>
                    <TitleText>Settings</TitleText>
                    <WindowControls>
                        <WindowButton aria-label="Minimize">
                            <svg width="11" height="11" viewBox="0 0 11 11" stroke="currentColor"><path d="M0 5.500h11" /></svg>
                        </WindowButton>
                        <WindowButton aria-label="Restore">
                            <svg width="11" height="11" viewBox="0 0 11 11" fill="none" stroke="currentColor">
                                <rect x="0.500" y="2.500" width="8" height="8" rx="1.500" />
                                <path d="M2.500.5h6a2 2 0 0 1 2 2v6" />
                            </svg>
                        </WindowButton>
                        <WindowButton aria-label="Close">
                            <svg width="11" height="11" viewBox="0 0 11 11" stroke="currentColor"><path d="m.5.5 10 10M10.500.5l-10 10" /></svg>
                        </WindowButton>
                    </WindowControls>
                </TitleBar>
                <WindowBody>
                    <SettingsSidebar />
                    <DateTimePage />
                    <ScrollThumb />
                </WindowBody>
            </SettingsWindow>
            <DesktopTaskbar />
            <ChangeDialog />
            <Pointer width="14" height="22" viewBox="0 0 14 22">
                <path d="M1.500 1.500v15l3.500-3.300 2.500 5.800 2.500-1.100-2.500-5.600h5z" fill="#ffffff" stroke="#111111" />
            </Pointer>
        </Desktop>
    </>

};

export default App;
